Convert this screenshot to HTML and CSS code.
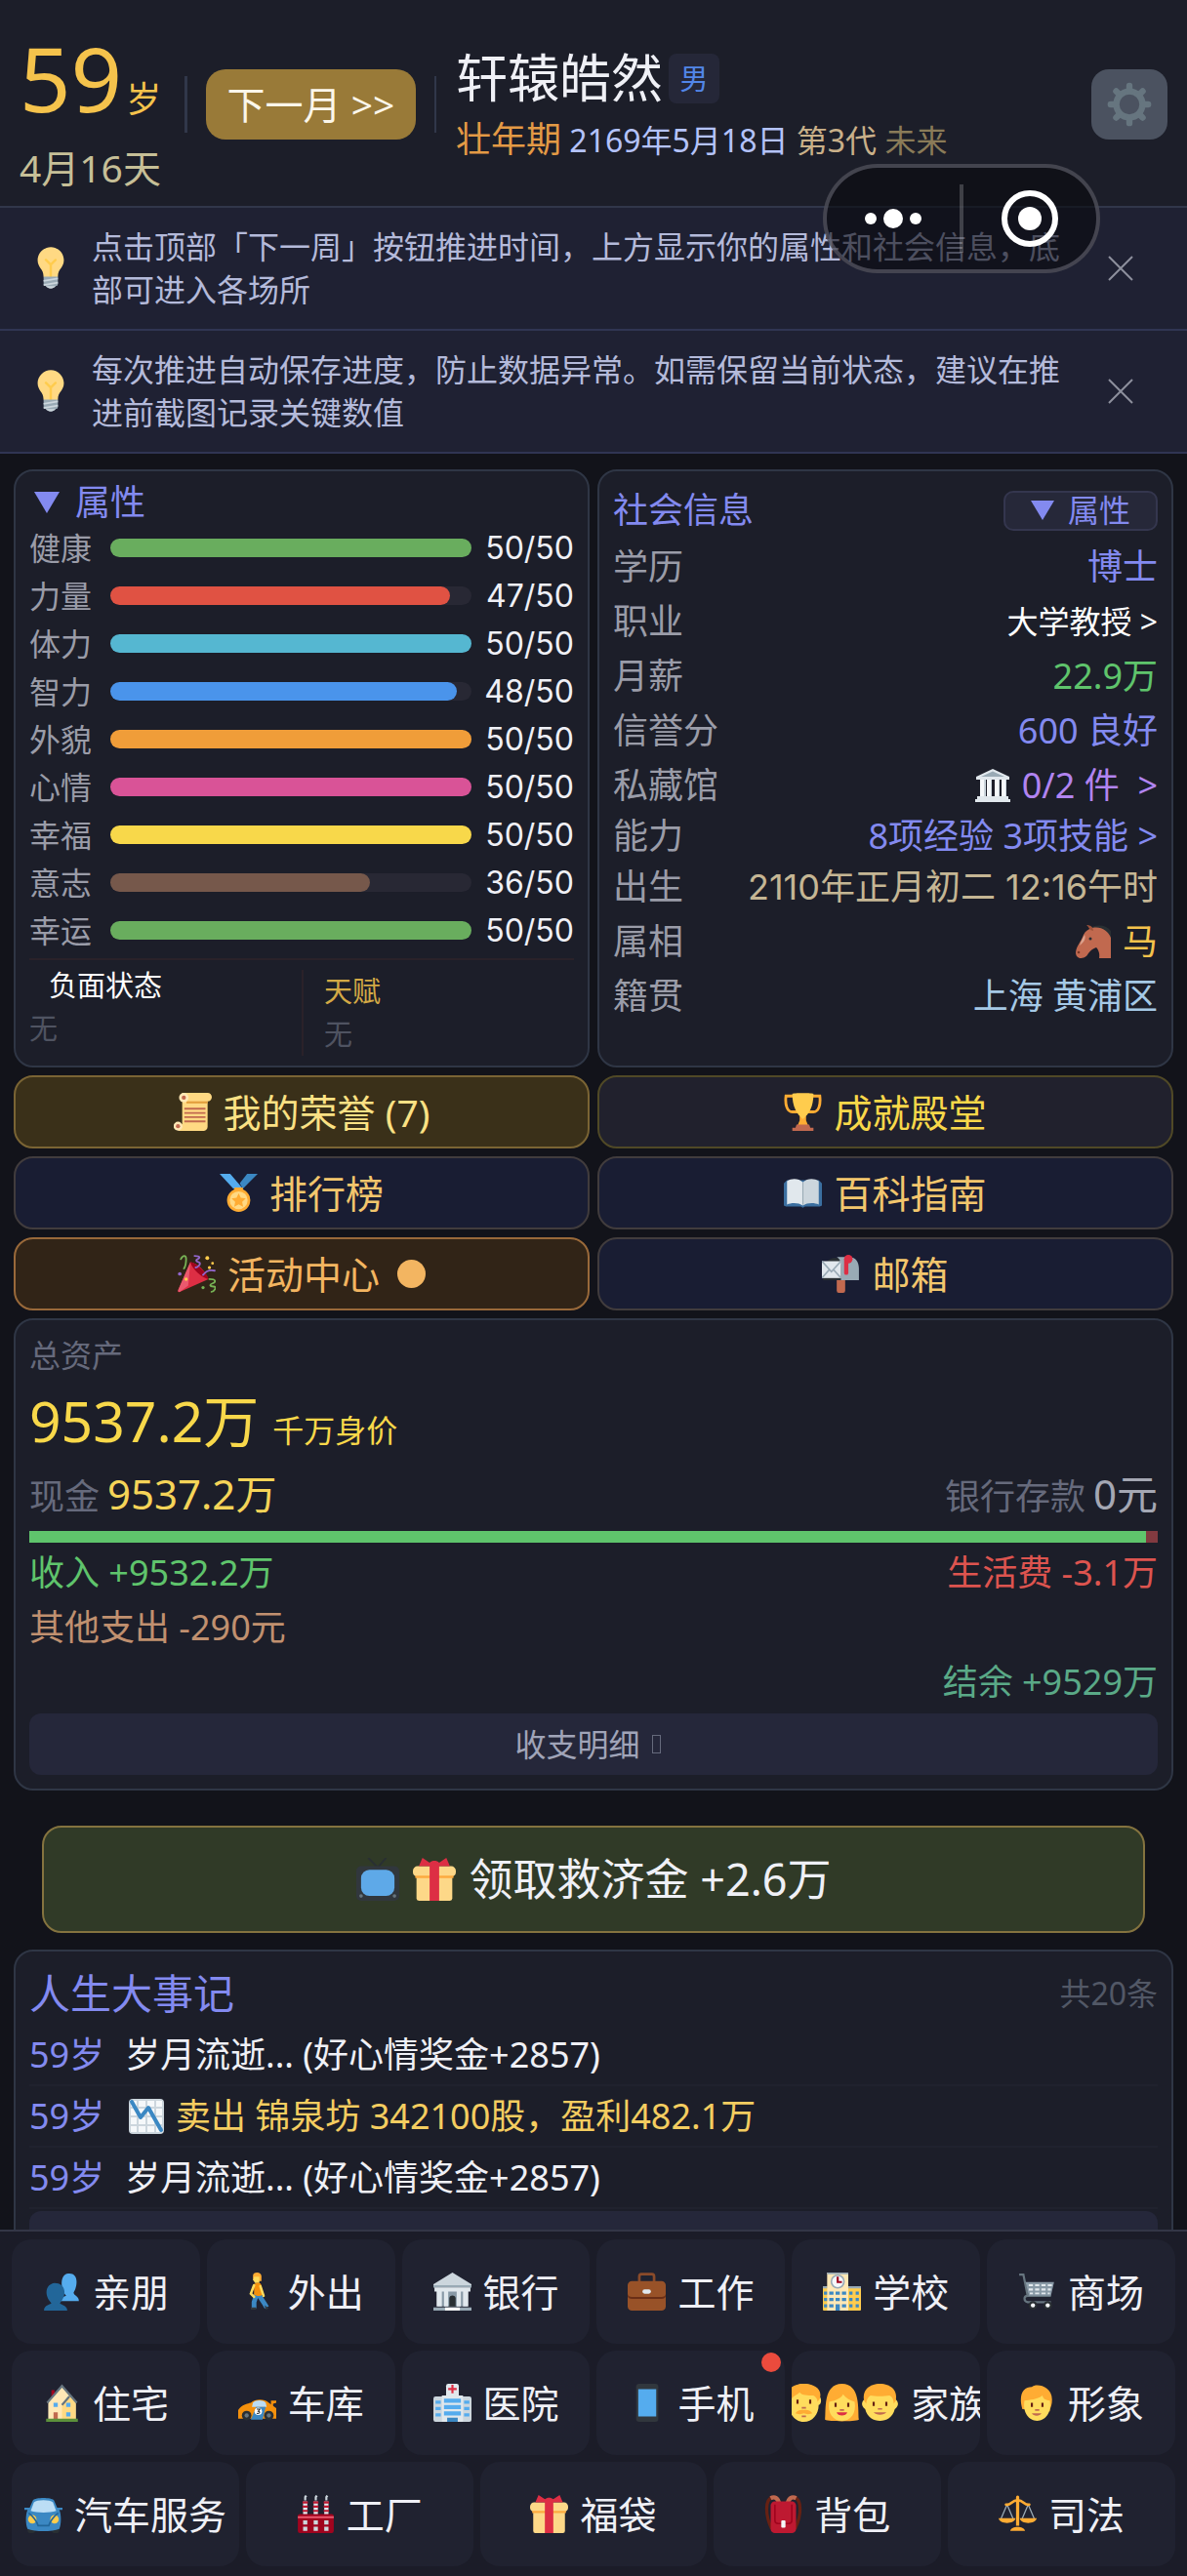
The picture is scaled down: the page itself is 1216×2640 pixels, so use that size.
FILE: index.html
```html
<!DOCTYPE html>
<html lang="zh-CN">
  <head>
    <meta charset="utf-8" />
    <meta name="viewport" content="width=device-width,initial-scale=1.0" />
    <title>轩辕皓然 59岁</title>
    <link rel="stylesheet" href="styles.css">
  </head>
  <body>
    <svg class="sprite" aria-hidden="true">
      <symbol id="bulb" viewBox="0 0 36 36">
        <path fill="#ffd983" d="M29 11.060c0 6.439-5 7.439-5 13.440 0 3.098-3.123 3.359-5.500 3.359-2.053 0-6.586-.779-6.586-3.361C11.914 18.500 7 17.500 7 11.060 7 5.029 12.285.140 18.083.140 23.883.140 29 5.029 29 11.060z"/>
        <path fill="#ccd6dd" d="M22.167 32.500c0 .828-2.234 2.500-4.167 2.500s-4.167-1.672-4.167-2.500 2.233-.500 4.167-.500c1.933 0 4.167-.328 4.167.500z"/>
        <path fill="#ffcc4d" d="M22.700 10.300a1 1 0 0 0-1.400 0L18 13.600l-3.300-3.300a1 1 0 1 0-1.400 1.400l3.700 3.700V26a1 1 0 1 0 2 0V15.400l3.700-3.700a1 1 0 0 0 0-1.400z"/>
        <path fill="#99aab5" d="M24 31a2 2 0 0 1-2 2h-8a2 2 0 0 1-2-2v-6h12v6z"/>
        <path d="M12 28.500l12-2M12 32l12-2" stroke="#ccd6dd" stroke-width="1.500"/>
      </symbol>
      <symbol id="gear" viewBox="0 0 36 36">
        <circle cx="18" cy="18" r="10.500" fill="none" stroke="#66757f" stroke-width="5"/>
        <g stroke="#66757f" stroke-width="5" stroke-linecap="round">
          <path d="M18 3v4M18 29v4M3 18h4M29 18h4M7.400 7.400l3 3M25.600 25.600l3 3M28.600 7.400l-3 3M10.400 25.600l-3 3"/>
        </g>
      </symbol>
      <symbol id="museum" viewBox="0 0 36 36">
        <path fill="#e1e8ed" d="M18 1L1 9v3h34V9z"/>
        <path fill="#99aab5" d="M18 3.500L6 9h24z"/>
        <path fill="#f5f8fa" d="M5 12h4v17H5zM12 12h4v17h-4zM20 12h4v17h-4zM27 12h4v17h-4z"/>
        <path fill="#ccd6dd" d="M9 12h2v17H9zM16 12h1v17h-1zM24 12h1v17h-1zM31 12h1v17h-1z"/>
        <path fill="#e1e8ed" d="M2 29h32v3h2v3H0v-3h2z"/>
      </symbol>
      <symbol id="horse" viewBox="0 0 36 36">
        <path fill="#292f33" d="M15 4c7-4 16-3 21 3v11L24 9z"/>
        <path fill="#c1694f" d="M36 35H24c1-5-1-9-3-11-3 1-6 3-8 6-2 4-5 5-9 5-3-1-4-3-4-6 1-7 5-10 8-18 2-4 5-6 9-7 9-2 16 3 19 10z"/>
        <path fill="#a0533b" d="M15 6c-2-2-2-4-4-5 4 0 7 2 7 6z"/>
        <circle cx="15" cy="15" r="1.500" fill="#292f33"/><circle cx="3" cy="29" r="1.300" fill="#7a3726"/>
        <path fill="#dba38f" d="M9 11c2 4-1 8-5 11 1-4 3-7 5-11z"/>
      </symbol>
      <symbol id="scroll" viewBox="0 0 36 36">
        <path fill="#ffd983" d="M8 0h24a4 4 0 0 1 0 8v24a4 4 0 0 1-4 4H4l4-7z"/>
        <path fill="#e39f3d" d="M12 8h20v2H12z"/>
        <circle cx="9.500" cy="4.500" r="4.500" fill="#ffe8b6"/><circle cx="9.500" cy="4.500" r="2" fill="#c1694f"/>
        <circle cx="4" cy="31.500" r="4.200" fill="#ffe8b6"/><circle cx="4" cy="31.500" r="2" fill="#c1694f"/>
        <path d="M10 15h20M10 19h20M10 23h20M10 27h20" stroke="#c1694f" stroke-width="1.700"/>
      </symbol>
      <symbol id="trophy" viewBox="0 0 36 36">
        <path fill="none" stroke="#ffac33" stroke-width="2.600" d="M9 3H2c-1 8 1 15 6 15h5M27 3h7c1 8-1 15-6 15h-5"/>
        <path fill="#ffac33" d="M15 22h6v4l2 5H13l2-5z"/>
        <path fill="#ffcc4d" d="M8 1c0-1 20-1 20 0 0 12-4 19-10 24C12 20 8 13 8 1z"/>
        <path fill="#c1694f" d="M12 30h12l1 3h3v3H8v-3h3z"/>
      </symbol>
      <symbol id="medal" viewBox="0 0 36 36">
        <path fill="#55acee" d="M0 0h10l12 14h-9z"/><path fill="#3b88c3" d="M36 0H26l-7 9 3 5z"/>
        <circle cx="18" cy="25" r="11" fill="#ffac33"/><circle cx="18" cy="25" r="8.500" fill="#ffd983"/>
        <path fill="#ffac33" d="M14 13h8v3h-8zM18 18.500l2 4.200 4.700.600-3.400 3.200.900 4.600-4.200-2.300-4.200 2.300.900-4.600-3.400-3.200 4.700-.600z"/>
      </symbol>
      <symbol id="book" viewBox="0 0 36 36">
        <path fill="#3b6fa0" d="M0 9l3-3h30l3 3v21l-2 1H20l-2 1-2-1H2l-2-1z"/>
        <path fill="#e1e8ed" d="M3 7c4-3 11-3 15 1v22c-4-3-11-3-15-1z"/>
        <path fill="#ccd6dd" d="M33 7c-4-3-11-3-15 1v22c4-3 11-3 15-1z"/>
        <path fill="#99aab5" d="M17.500 8h1v21h-1z"/>
      </symbol>
      <symbol id="party" viewBox="0 0 36 36">
        <path fill="#dd2e44" d="M12 7c7 1 14 8 17 16L2 35c-2 1-2-1-1-3z"/>
        <path fill="#ea596e" d="M12 7l-2 22-8 6c-2 0-2-1-1-3z"/>
        <path fill="#a0041e" d="M12 7c4-1 17 11 17 16-6-1-15-9-17-16z"/>
        <g fill="none" stroke-width="1.700" stroke-linecap="round">
          <path stroke="#77b255" d="M3 4c2-4 5-4 5 0s0 6-2 9M30 23c7 0 6 3 3 4s-3 3 1 3 0 5-2 5"/>
          <path stroke="#9266cc" d="M16 1c6 0 5 2 3 3s-2 2 1 3-1 5-3 5M24 19c3-4 7-5 11-4"/>
        </g>
        <g fill="#ffcc4d"><circle cx="28" cy="3" r="1.800"/><circle cx="33" cy="8" r="1.300"/><circle cx="30" cy="12" r="1.500"/><circle cx="8" cy="23" r="1.600"/></g>
        <circle cx="2" cy="18" r="1.700" fill="#9266cc"/><circle cx="24" cy="31" r="1.500" fill="#77b255"/>
      </symbol>
      <symbol id="mailbox" viewBox="0 0 36 36">
        <path fill="#c1694f" d="M14 20h8v14a2 2 0 0 1-2 2h-4a2 2 0 0 1-2-2z"/>
        <path fill="#292f33" d="M4 8c2-6 12-6 16-3v19H1z"/>
        <path fill="#99aab5" d="M14 2h12c6 0 9 5 9 11v11H18V11c0-5-1-7-4-9z"/>
        <path fill="#e1e8ed" d="M0 6h18v16H0z"/><path fill="none" stroke="#99aab5" stroke-width="1.500" d="M0 6l9 10 9-10M0 22l7-8M18 22l-7-8"/>
        <path fill="#dd2e44" d="M21 4h4v13a2 2 0 0 1-4 0z"/><circle cx="25" cy="4" r="4" fill="#dd2e44"/>
      </symbol>
      <symbol id="tv" viewBox="0 0 36 36">
        <path d="M18 8L10 0M18 8l7-8" stroke="#292f33" stroke-width="1.500"/>
        <rect y="7" width="36" height="29" rx="4" fill="#31373d"/><rect x="4" y="10" width="28" height="22" rx="7" fill="#5ea9e8"/>
        <circle cx="4" cy="32" r="1.500" fill="#66757f"/><circle cx="32" cy="32" r="1.500" fill="#66757f"/>
      </symbol>
      <symbol id="gift" viewBox="0 0 36 36">
        <path fill="#fdd888" d="M3 15h30v19a2 2 0 0 1-2 2H5a2 2 0 0 1-2-2z"/>
        <rect y="7" width="36" height="9" rx="4" fill="#fdd888"/><path fill="#fcab40" d="M2 15h32v2H2z"/>
        <path fill="#dd2e44" d="M14 5h8v31h-8zM5 7L8 0l6 4c2-2 6-2 8 0l6-4 3 7z"/>
      </symbol>
      <symbol id="chart" viewBox="0 0 36 36">
        <rect width="36" height="36" rx="4" fill="#ccd6dd"/>
        <path fill="#f5f8fa" d="M2 2h6v6H2zM10 2h7v6h-7zM19 2h7v6h-7zM28 2h6v6h-6zM2 10h6v7H2zM10 10h7v7h-7zM19 10h7v7h-7zM28 10h6v7h-6zM2 19h6v7H2zM10 19h7v7h-7zM19 19h7v7h-7zM28 19h6v7h-6zM2 28h6v6H2zM10 28h7v6h-7zM19 28h7v6h-7zM28 28h6v6h-6z"/>
        <path fill="none" stroke="#3b88c3" stroke-width="4" stroke-linejoin="round" stroke-linecap="round" d="M3 3l9 16 8-10 13 23"/>
      </symbol>
      <symbol id="people" viewBox="0 0 36 36">
        <path fill="#55acee" d="M34 27H17c0-4 3-4 5-5-5-5-7-20 2-21 10-1 9 12 5 18 0 3 5 3 5 8z"/>
        <path fill="#226699" d="M1 36c0-5 4-5 7-7-7-7-6-18 3-19 11 0 12 12 5 19 2 2 7 2 7 7z"/>
      </symbol>
      <symbol id="walk" viewBox="0 0 36 36">
        <path fill="none" stroke="#3b88c3" stroke-width="4.500" d="M18 19l-3 9v6M18 19c3 5 5 7 9 14"/>
        <path fill="#ffac33" d="M14 3c0-4 8-4 8 1v4h-3l-5-2z"/><path fill="#ffdc5d" d="M15 4h5v6h-4l-2-3z"/>
        <path fill="#f4900c" d="M15 11c3-2 6-2 7 1l1 9c-3 2-6 1-8 0z"/>
        <path fill="none" stroke="#ffdc5d" stroke-width="2.400" stroke-linecap="round" d="M15 12l-3 8 3 3M21 13l3 9"/>
        <path fill="#31373d" d="M12 33h5v2h-5zM25 31l4 3-3 1z"/>
      </symbol>
      <symbol id="bank" viewBox="0 0 36 36">
        <path fill="#ccd6dd" d="M18 0L0 11v3h36v-3z"/><path fill="#99aab5" d="M0 12h36v2H0z"/>
        <path fill="#8899a6" d="M4 17h28v15H4z"/><path fill="#e1e8ed" d="M1 14h34v4H1zM3 18h5v14H3zM10 18h4v14h-4zM22 18h4v14h-4zM28 18h5v14h-5z"/>
        <path fill="#292f33" d="M15 32v-8c1-3 5-3 6 0v8z"/><path fill="#99aab5" d="M0 33h36v3H0z"/><path fill="#f5f8fa" d="M11 33h14v3H11z"/>
      </symbol>
      <symbol id="briefcase" viewBox="0 0 36 36">
        <path fill="none" stroke="#8a4b2a" stroke-width="2.500" d="M11 9V4c0-2 1-2.500 2-2.500h10c1 0 2 .500 2 2.500v5"/>
        <rect y="8" width="36" height="28" rx="4" fill="#985228"/><path fill="#6a2e16" d="M0 20c0 2 2 3 4 3h28c2 0 4-1 4-3v2c0 2-2 3-4 3H4c-2 0-4-1-4-3z"/>
        <rect x="14" y="16" width="8" height="4" rx="2" fill="#e1e8ed"/>
      </symbol>
      <symbol id="school" viewBox="0 0 36 36">
        <rect y="13" width="36" height="23" rx="1" fill="#ffcc4d"/><path fill="#ffe8b6" d="M4 0h20v36H4z"/>
        <path fill="#99aab5" d="M4 0h20v1.500H4zM0 13h4v2H0zM24 13h12v2H24z"/>
        <circle cx="14" cy="8.500" r="6" fill="#f5f8fa" stroke="#99aab5" stroke-width="1.500"/><path d="M14 4v5h4" fill="none" stroke="#a0041e" stroke-width="2"/>
        <path fill="#3b88c3" d="M1 18h3v3H1zM6 18h4v3H6zM12 18h4v3h-4zM18 18h4v3h-4zM25 18h3v3h-3zM31 18h3v3h-3zM1 24h3v3H1zM6 24h4v3H6zM12 24h4v3h-4zM18 24h4v3h-4zM25 24h3v3h-3zM31 24h3v3h-3zM1 30h3v3H1zM6 30h4v3H6zM12 30h4v6h-4zM18 30h4v3h-4zM25 30h3v3h-3zM31 30h3v3h-3z"/>
      </symbol>
      <symbol id="cart" viewBox="0 0 36 36">
        <path fill="none" stroke="#66757f" stroke-width="2" d="M1 2h4l4 20h22M9 22c-4 0-4 5 0 6h22"/>
        <path fill="#8899a6" d="M7 9h27l-3 13H10z"/><path fill="#e1e8ed" d="M10 11h4v2h-4zM16 11h4v2h-4zM22 11h4v2h-4zM28 11h4v2h-4zM10 15h4v2h-4zM16 15h4v2h-4zM22 15h4v2h-4zM28 15h3v2h-3zM11 19h3v1.500h-3zM16 19h4v1.500h-4zM22 19h4v1.500h-4zM28 19h2v1.500h-2z"/>
        <circle cx="14" cy="31" r="4" fill="#292f33"/><circle cx="28" cy="31" r="4" fill="#292f33"/><circle cx="14" cy="31" r="2" fill="#f5f8fa"/><circle cx="28" cy="31" r="2" fill="#f5f8fa"/>
      </symbol>
      <symbol id="house" viewBox="0 0 36 36">
        <path fill="#a0041e" d="M8 6h3v8H8z"/><path fill="#ffe8b6" d="M18 3L5 17v17h26V17z"/><path fill="#ffd983" d="M31 17l-6-5-7 8v14h13z"/>
        <path fill="none" stroke="#66757f" stroke-width="2" d="M4 18L18 2l14 16M18 20l7-8"/>
        <path fill="#55acee" d="M10 18h4v4h-4zM22 18h4v4h-4zM22 27h4v4h-4z"/><path fill="#c1694f" d="M10 27h4v7h-4z"/><path fill="#5c913b" d="M3 33h30v3H3z"/>
      </symbol>
      <symbol id="racecar" viewBox="0 0 36 36">
        <path fill="#f4900c" d="M0 33V25c2-4 7-6 12-7 4-4 13-4 17 0l7 5v10z"/><path fill="#f4900c" d="M31 16h5v2l-3 1v4h-2z"/>
        <path fill="#bbddf5" d="M14 18c3-3 9-3 12 0l1 4H13z"/><path fill="#3b88c3" d="M17 22h9l-3 12H12z"/>
        <circle cx="8" cy="30" r="4.500" fill="#292f33"/><circle cx="29" cy="30" r="4.500" fill="#292f33"/><circle cx="8" cy="30" r="2" fill="#66757f"/><circle cx="29" cy="30" r="2" fill="#66757f"/>
        <circle cx="19" cy="26" r="3.500" fill="#fff"/><path fill="none" stroke="#292f33" d="M17.500 24h3l-1.500 2c2 0 2 2.500-1.500 2"/>
      </symbol>
      <symbol id="hospital" viewBox="0 0 36 36">
        <rect x="12" width="12" height="14" rx="2" fill="#e1e8ed"/><path fill="#dd2e44" d="M17 1h2v3h3v2h-3v3h-2V6h-3V4h3z"/>
        <rect y="12" width="36" height="24" rx="2" fill="#ccd6dd"/><path fill="#e1e8ed" d="M8 11h20v25H8z"/>
        <path fill="#55acee" d="M10 14h16v4H10zM10 20h16v4H10zM10 26h16v4H10zM2 16h5v3H2zM2 22h5v3H2zM2 28h5v3H2zM29 16h5v3h-5zM29 22h5v3h-5zM29 28h5v3h-5z"/><path fill="#3b88c3" d="M13 32h10v4H13z"/>
      </symbol>
      <symbol id="phone" viewBox="0 0 36 36">
        <rect x="8" width="21" height="36" rx="3" fill="#31373d"/><path fill="#55acee" d="M10 5h17v26H10z"/>
      </symbol>
      <symbol id="man" viewBox="0 0 36 36">
        <path fill="#ffdc5d" d="M4 12c0-16 28-16 28 0 3 0 3 8 0 8 0 9-6 16-14 16S4 29 4 20c-3 0-3-8 0-8z"/>
        <path fill="#ffac33" d="M3 14C1 5 8 0 18 0s18 5 15 14l-2 3c0-3-2-5-4-6-5 0-11 0-13-3-3 3-8 4-9 9z"/>
        <path fill="#662113" d="M11 15h2v4h-2zM23 15h2v4h-2z"/><path fill="#c1694f" d="M16 22h4v1.500h-4z"/>
        <path fill="#ffac33" d="M10 28c1-2 5-4 8-3 3-1 7 1 8 3-2 1-6 1-8 0-2 1-6 1-8 0z"/><path fill="#c1694f" d="M16 30h4v1.500h-4z"/>
      </symbol>
      <symbol id="woman" viewBox="0 0 36 36">
        <path fill="#ffac33" d="M2 34C3 25 0 0 18 0s15 25 16 34c-4 2-28 2-32 0z"/>
        <path fill="#ffdc5d" d="M6 17c7-1 12-4 13-7 3 4 7 6 11 7 2 11-4 18-12 18S4 28 6 17z"/>
        <path fill="#662113" d="M11 18h2v4h-2zM23 18h2v4h-2z"/><path fill="#c1694f" d="M16 24h4v1.500h-4z"/><path fill="#dd2e44" d="M13 27h10c-1 4-9 4-10 0z"/>
      </symbol>
      <symbol id="boy" viewBox="0 0 36 36">
        <path fill="#ffdc5d" d="M4 14C6-1 30-1 32 14c4 3 4 7 0 10-2 8-8 11-14 11S6 32 4 24c-4-3-4-7 0-10z"/>
        <path fill="#ffac33" d="M3 16C1 6 8 0 18 0s17 6 15 16l-2 3c0-5-2-7-4-8-5 1-14 1-18 0-3 2-4 5-4 8z"/>
        <path fill="#662113" d="M11 17h2v4h-2zM23 17h2v4h-2z"/><path fill="#c1694f" d="M16 23h4v1.500h-4zM12 27h12c-2 3-10 3-12 0z"/>
      </symbol>
      <symbol id="person" viewBox="0 0 36 36">
        <path fill="#ffac33" d="M4 24C0 10 5 3 13 3c4-4 20-1 19 13 0 5-2 7-2 10z"/>
        <path fill="#ffdc5d" d="M6 16c5-1 12-1 17-5 1 4 3 4 7 5 2 11-4 19-12 19S4 27 6 16z"/>
        <path fill="#662113" d="M12 18h2v4h-2zM22 18h2v4h-2z"/><path fill="#c1694f" d="M16 24h4v1.500h-4zM13 28h9c-1 3-8 3-9 0z"/>
      </symbol>
      <symbol id="car" viewBox="0 0 36 36">
        <rect x="3" y="28" width="7" height="8" rx="2" fill="#292f33"/><rect x="26" y="28" width="7" height="8" rx="2" fill="#292f33"/>
        <path fill="#3b88c3" d="M0 12h5l3-7c3-3 17-3 20 0l3 7h5v2h-3c2 4 2 14 0 18-7 3-23 3-30 0-2-4-2-14 0-18H0z"/>
        <path fill="#bbddf5" d="M6 15l3-8c3-3 15-3 18 0l3 8c-6 2-18 2-24 0z"/>
        <circle cx="7.500" cy="23" r="4" fill="#ffcc4d"/><circle cx="28.500" cy="23" r="4" fill="#ffcc4d"/>
        <path fill="none" stroke="#226699" stroke-width="1.500" d="M4 17c5 4 8 9 9 12h10c1-3 4-8 9-12"/>
      </symbol>
      <symbol id="factory" viewBox="0 0 36 36">
        <path fill="#e1e8ed" d="M6 6h4v13H6zM16 6h4v13h-4zM26 6h4v13h-4z"/><path fill="#be1931" d="M5.500 6h5v2h-5zM5.500 10h5v2h-5zM5.500 14h5v2h-5zM15.500 6h5v2h-5zM15.500 10h5v2h-5zM15.500 14h5v2h-5zM25.500 6h5v2h-5zM25.500 10h5v2h-5zM25.500 14h5v2h-5z"/>
        <path d="M8 5V2l1-1.500M18 5V2l1-1.500M28 5V2l1-1.500" stroke="#ccd6dd" stroke-width="2"/>
        <rect x="1" y="18" width="34" height="18" rx="2" fill="#a0041e"/><path fill="#ea596e" d="M1 20h34v2H1z"/>
        <path fill="#ccd6dd" d="M6 24h4v4H6zM16 24h4v4h-4zM26 24h4v4h-4zM6 30h4v4H6zM16 30h4v4h-4zM26 30h4v4h-4z"/>
      </symbol>
      <symbol id="backpack" viewBox="0 0 36 36">
        <path fill="none" stroke="#662113" stroke-width="3" d="M8 2C0 4 1 20 7 32M28 2c8 2 7 18 1 30"/>
        <path fill="none" stroke="#c1694f" stroke-width="4" d="M6 3c4-2 7 0 8 5M30 3c-4-2-7 0-8 5"/>
        <rect x="6" y="6" width="24" height="30" rx="4" fill="#be1931"/><path fill="none" stroke="#a0041e" stroke-width="1.500" d="M10 9v15c0 2 1 3 3 3h10c2 0 3-1 3-3V9"/><rect x="16" y="24" width="4" height="7" rx="1" fill="#f5f8fa"/>
      </symbol>
      <symbol id="scales" viewBox="0 0 36 36">
        <path fill="none" stroke="#99aab5" stroke-width="1.200" d="M8 9L2 23M8 9l6 14M28 9l-6 14M28 9l6 14"/>
        <path fill="#ffac33" d="M16.500 2a1.500 1.500 0 0 1 3 0v27h-3zM0 22h16c-1 6-15 6-16 0zM20 22h16c-1 6-15 6-16 0zM11 34c1-5 13-5 14 0z"/>
        <path fill="none" stroke="#ffac33" stroke-width="2.500" stroke-linecap="round" d="M7 9c5 1 5-4 11-4s6 5 11 4"/>
      </symbol>
    </svg>

    <header class="top">
      <div class="age">
        <p class="years"><strong>59</strong><span>岁</span></p>
        <p class="days">4月16天</p>
      </div>
      <div class="bar-line thick"></div>
      <button class="next" type="button">下一月 &gt;&gt;</button>
      <div class="bar-line"></div>
      <div class="who">
        <h1>轩辕皓然 <span class="sex">男</span></h1>
        <p><span class="stage">壮年期</span> <span class="date">2169年5月18日</span> <span class="gen">第3代</span> <span class="era">未来</span></p>
      </div>
      <button class="settings" type="button" aria-label="设置"><svg><use href="#gear"/></svg></button>
    </header>

    <div class="capsule">
      <button type="button" aria-label="更多"><svg class="dots" viewBox="0 0 60 24"><circle cx="7" cy="12" r="6"/><circle cx="30" cy="12" r="10"/><circle cx="53" cy="12" r="6"/></svg></button>
      <button type="button" aria-label="关闭"><svg class="target" viewBox="0 0 58 58"><circle class="ring" cx="29" cy="29" r="26"/><circle cx="29" cy="29" r="12"/></svg></button>
    </div>

    <div class="tip">
      <svg class="tip-icon"><use href="#bulb"/></svg>
      <p>点击顶部「下一周」按钮推进时间，上方显示你的属性和社会信息，底部可进入各场所</p>
      <button type="button" aria-label="关闭提示"><svg viewBox="0 0 26 26"><path d="M1 1l24 24M25 1L1 25"/></svg></button>
    </div>
    <div class="tip">
      <svg class="tip-icon"><use href="#bulb"/></svg>
      <p>每次推进自动保存进度，防止数据异常。如需保留当前状态，建议在推进前截图记录关键数值</p>
      <button type="button" aria-label="关闭提示"><svg viewBox="0 0 26 26"><path d="M1 1l24 24M25 1L1 25"/></svg></button>
    </div>

    <main>
      <div class="grid">
        <section class="panel stats">
          <h2><i class="tri"></i>属性</h2>
          <ul>
            <li><span>健康</span><div class="track"><div class="fill green" style="width: 100%"></div></div><b>50/50</b></li>
            <li><span>力量</span><div class="track"><div class="fill red" style="width: 94%"></div></div><b>47/50</b></li>
            <li><span>体力</span><div class="track"><div class="fill cyan" style="width: 100%"></div></div><b>50/50</b></li>
            <li><span>智力</span><div class="track"><div class="fill blue" style="width: 96%"></div></div><b>48/50</b></li>
            <li><span>外貌</span><div class="track"><div class="fill orange" style="width: 100%"></div></div><b>50/50</b></li>
            <li><span>心情</span><div class="track"><div class="fill pink" style="width: 100%"></div></div><b>50/50</b></li>
            <li><span>幸福</span><div class="track"><div class="fill yellow" style="width: 100%"></div></div><b>50/50</b></li>
            <li><span>意志</span><div class="track"><div class="fill brown" style="width: 72%"></div></div><b>36/50</b></li>
            <li><span>幸运</span><div class="track"><div class="fill green" style="width: 100%"></div></div><b>50/50</b></li>
          </ul>
          <div class="traits">
            <div class="negative"><h3>负面状态</h3><p>无</p></div>
            <div class="talent"><h3>天赋</h3><p>无</p></div>
          </div>
        </section>

        <section class="panel social">
          <div class="social-head">
            <h2>社会信息</h2>
            <button type="button"><i class="tri"></i>属性</button>
          </div>
          <dl>
            <div><dt>学历</dt><dd class="violet">博士</dd></div>
            <div><dt>职业</dt><dd class="job">大学教授 &gt;</dd></div>
            <div><dt>月薪</dt><dd class="money">22.9万</dd></div>
            <div><dt>信誉分</dt><dd class="violet">600 良好</dd></div>
            <div><dt>私藏馆</dt><dd class="purple"><svg><use href="#museum"/></svg>0/2 件 &nbsp;&gt;</dd></div>
            <div class="tight"><dt>能力</dt><dd class="violet">8项经验 3项技能 &gt;</dd></div>
            <div><dt>出生</dt><dd class="sand">2110年正月初二 12:16午时</dd></div>
            <div><dt>属相</dt><dd class="gold"><svg><use href="#horse"/></svg>马</dd></div>
            <div><dt>籍贯</dt><dd class="sky">上海 黄浦区</dd></div>
          </dl>
        </section>

        <button class="link honor" type="button"><svg><use href="#scroll"/></svg>我的荣誉 (7)</button>
        <button class="link hall" type="button"><svg><use href="#trophy"/></svg>成就殿堂</button>
        <button class="link" type="button"><svg><use href="#medal"/></svg>排行榜</button>
        <button class="link" type="button"><svg><use href="#book"/></svg>百科指南</button>
        <button class="link event" type="button"><svg><use href="#party"/></svg>活动中心<i class="dot"></i></button>
        <button class="link" type="button"><svg><use href="#mailbox"/></svg>邮箱</button>
      </div>

      <section class="panel assets">
        <h2>总资产</h2>
        <p class="total"><strong>9537.2万</strong><span>千万身价</span></p>
        <div class="row cash">
          <p>现金 <b class="yellow-text">9537.2万</b></p>
          <p>银行存款 <b>0元</b></p>
        </div>
        <div class="flow"><div class="in" style="width: 99%"></div></div>
        <div class="row"><span class="income">收入 +9532.2万</span><span class="living">生活费 -3.1万</span></div>
        <div class="row"><span class="other">其他支出 -290元</span></div>
        <div class="row end"><span class="balance">结余 +9529万</span></div>
        <button class="detail" type="button">收支明细<i class="box"></i></button>
      </section>

      <button class="claim" type="button"><svg><use href="#tv"/></svg><svg><use href="#gift"/></svg>领取救济金 +2.6万</button>

      <section class="panel history">
        <div class="history-head"><h2>人生大事记</h2><span>共20条</span></div>
        <ol>
          <li><span>59岁</span><p>岁月流逝... (好心情奖金+2857)</p></li>
          <li><span>59岁</span><p class="trade"><svg><use href="#chart"/></svg>卖出 锦泉坊 342100股，盈利482.1万</p></li>
          <li><span>59岁</span><p>岁月流逝... (好心情奖金+2857)</p></li>
        </ol>
        <button class="more" type="button" aria-label="查看更多"></button>
      </section>
    </main>

    <nav>
      <div class="nav-row">
        <button type="button"><svg><use href="#people"/></svg>亲朋</button>
        <button type="button"><svg><use href="#walk"/></svg>外出</button>
        <button type="button"><svg><use href="#bank"/></svg>银行</button>
        <button type="button"><svg><use href="#briefcase"/></svg>工作</button>
        <button type="button"><svg><use href="#school"/></svg>学校</button>
        <button type="button"><svg><use href="#cart"/></svg>商场</button>
      </div>
      <div class="nav-row">
        <button type="button"><svg><use href="#house"/></svg>住宅</button>
        <button type="button"><svg><use href="#racecar"/></svg>车库</button>
        <button type="button"><svg><use href="#hospital"/></svg>医院</button>
        <button type="button"><svg><use href="#phone"/></svg>手机<i class="badge"></i></button>
        <button type="button"><span class="family"><svg><use href="#man"/></svg><svg><use href="#woman"/></svg><svg><use href="#boy"/></svg></span>家族</button>
        <button type="button"><svg><use href="#person"/></svg>形象</button>
      </div>
      <div class="nav-row">
        <button type="button"><svg><use href="#car"/></svg>汽车服务</button>
        <button type="button"><svg><use href="#factory"/></svg>工厂</button>
        <button type="button"><svg><use href="#gift"/></svg>福袋</button>
        <button type="button"><svg><use href="#backpack"/></svg>背包</button>
        <button type="button"><svg><use href="#scales"/></svg>司法</button>
      </div>
    </nav>
  </body>
</html>
```

FILE: styles.css
```css
* {
  box-sizing: border-box;
}
body {
  margin: 0;
  height: 100vh;
  display: flex;
  flex-direction: column;
  background: #12131a;
  color: #eff0f6;
  font-family: "Noto Sans", "Noto Sans CJK SC", sans-serif;
  font-size: 36px;
  line-height: 56px;
}
h1, h2, h3, p, ul, ol, dl, dd {
  margin: 0;
  padding: 0;
  font-weight: 400;
}
ul, ol {
  list-style: none;
}
b, strong {
  font-weight: 400;
}
button {
  font: inherit;
  color: inherit;
  padding: 0;
  border: none;
  background: none;
  cursor: pointer;
}
svg {
  flex-shrink: 0;
}
.sprite {
  display: none;
}

/* top bar */
.top {
  display: flex;
  align-items: center;
  padding: 22px 20px 19px;
  background: #1c1e29;
  border-bottom: 2px solid #31374a;
}
.age {
  width: 169px;
}
.years {
  display: flex;
  align-items: baseline;
  gap: 4px;
  color: #f5c34c;
  line-height: 36px;
}
.years strong {
  font-size: 92px;
  line-height: 116px;
}
.days {
  margin-top: 14px;
  font-size: 39px;
  line-height: 40px;
  color: #c6bf97;
}
.bar-line {
  width: 2px;
  height: 58px;
  background: #31374a;
}
.bar-line.thick {
  width: 3px;
}
.next {
  width: 215px;
  height: 72px;
  margin: 0 19px;
  border-radius: 20px;
  background: #997a38;
  color: #fbf6ea;
  font-size: 39px;
  white-space: nowrap;
}
.who {
  flex: 1;
  padding-left: 20px;
}
.who h1 {
  display: flex;
  align-items: center;
  gap: 6px;
  font-size: 53px;
  line-height: 64px;
}
.sex {
  width: 52px;
  border-radius: 8px;
  background: #252738;
  color: #5286e8;
  font-size: 29px;
  line-height: 51px;
  text-align: center;
}
.who p {
  margin-top: 10px;
  font-size: 32px;
  line-height: 44px;
}
.stage {
  font-size: 36px;
  line-height: 36px;
  color: #e39a45;
}
.date {
  color: #b4c3fb;
}
.gen {
  color: #c9b089;
}
.era {
  color: #8a7b58;
}
.settings {
  width: 78px;
  height: 72px;
  border-radius: 18px;
  background: #4b5260;
  display: grid;
  place-items: center;
}
.settings svg {
  width: 46px;
  height: 46px;
}

/* floating system capsule */
.capsule {
  position: absolute;
  top: 168px;
  right: 89px;
  width: 284px;
  height: 112px;
  display: flex;
  align-items: center;
  border: 4px solid rgba(120, 120, 132, 0.5);
  border-radius: 56px;
  background: rgba(8, 8, 14, 0.6);
}
.capsule button {
  flex: 1;
  height: 70px;
  display: grid;
  place-items: center;
}
.capsule button + button {
  border-left: 4px solid rgba(255, 255, 255, 0.2);
}
.capsule svg {
  fill: #fff;
}
.dots {
  width: 60px;
  height: 24px;
}
.target {
  width: 58px;
  height: 58px;
}
.ring {
  fill: none;
  stroke: #fff;
  stroke-width: 6;
}

/* tips */
.tip {
  display: flex;
  align-items: center;
  gap: 20px;
  padding: 18px 32px 18px 30px;
  background: #1f2133;
  border-bottom: 2px solid #303553;
}
.tip-icon {
  width: 44px;
  height: 44px;
}
.tip p {
  flex: 1;
  font-size: 32px;
  line-height: 44px;
  color: #b4bada;
}
.tip button {
  width: 72px;
  height: 72px;
  display: grid;
  place-items: center;
}
.tip button svg {
  width: 26px;
  height: 26px;
  stroke: #8d909d;
  stroke-width: 2;
}

main {
  flex: 1;
  min-height: 0;
  overflow: hidden;
  padding: 16px 14px 0;
}
.grid {
  display: grid;
  grid-template-columns: 1fr 1fr;
  gap: 8px;
}
.panel {
  padding: 10px 14px;
  border: 2px solid #2f3645;
  border-radius: 20px;
  background: #1c1e29;
}
.panel h2 {
  font-size: 36px;
  color: #838af0;
}
.tri {
  border: solid transparent;
  border-width: 22px 13px 0;
  border-top-color: #838af0;
}

/* attributes */
.stats h2 {
  display: flex;
  align-items: center;
  gap: 16px;
  padding-left: 5px;
  line-height: 44px;
}
.stats li {
  display: grid;
  grid-template-columns: 83px 1fr 105px;
  align-items: center;
  font-size: 32px;
  line-height: 49px;
}
.stats li span {
  color: #9a9ca8;
}
.stats li b {
  font-family: Inter, sans-serif;
  text-align: right;
}
.track {
  height: 19px;
  border-radius: 10px;
  background: #282834;
}
.fill {
  height: 100%;
  border-radius: 10px;
}
.green { background: #69ad5e; }
.red { background: #e05243; }
.cyan { background: #55b7d1; }
.blue { background: #4a94eb; }
.orange { background: #f09d39; }
.pink { background: #d95397; }
.yellow { background: #f8d84a; }
.brown { background: #76584b; }
.traits {
  display: grid;
  grid-template-columns: 1fr 1fr;
  margin-top: 4px;
  padding-top: 4px;
  border-top: 2px solid #2a2229;
  font-size: 29px;
  line-height: 44px;
}
.traits h3 {
  font-size: 29px;
}
.traits p {
  color: #4f5361;
}
.negative h3 {
  padding-left: 20px;
  color: #fff;
}
.talent {
  margin-top: 6px;
  padding-left: 21px;
  border-left: 2px solid #2a2229;
}
.talent h3 {
  color: #d3a945;
}

/* social info */
.social-head {
  display: flex;
  align-items: center;
  justify-content: space-between;
  height: 60px;
}
.social-head button {
  width: 158px;
  height: 41px;
  display: flex;
  align-items: center;
  justify-content: center;
  gap: 14px;
  border: 2px solid #34364e;
  border-radius: 10px;
  background: #262839;
  color: #838af0;
  font-size: 32px;
}
.social-head .tri {
  border-width: 20px 12px 0;
}
.social dl div {
  display: flex;
  justify-content: space-between;
}
.social dl .tight {
  line-height: 48px;
}
.social dt {
  color: #9a9ca8;
}
.social dd {
  display: flex;
  align-items: center;
}
.social dd svg {
  width: 36px;
  height: 36px;
  margin-right: 12px;
}
.violet { color: #838af0; }
.social .job { color: #fff; font-size: 32px; }
.money { color: #5fc46c; }
.purple { color: #b184f0; }
.sand { color: #c5b694; font-family: Inter, "Noto Sans CJK SC", sans-serif; }
.gold { color: #f5c34c; }
.sky { color: #a5c9e6; }

/* shortcut buttons */
.link {
  display: flex;
  align-items: center;
  justify-content: center;
  gap: 12px;
  height: 75px;
  border: 2px solid #413c3d;
  border-radius: 20px;
  background: #191d33;
  color: #f2c66d;
  font-size: 39px;
}
.link svg {
  width: 39px;
  height: 39px;
}
.honor {
  background: #3a3019;
  border-color: #7a6434;
  color: #fbe184;
}
.hall {
  background: #21212d;
  border-color: #504926;
  color: #f8d84a;
}
.event {
  background: #312417;
  border-color: #99693a;
  color: #f3b561;
}
.dot {
  width: 29px;
  height: 29px;
  margin-left: 6px;
  border-radius: 50%;
  background: #f3b561;
}

/* assets */
.assets {
  margin-top: 8px;
  padding: 14px;
}
.assets h2 {
  font-size: 32px;
  line-height: 44px;
  color: #666a7c;
}
.total {
  display: flex;
  align-items: baseline;
  gap: 14px;
  line-height: 90px;
  color: #f8d84a;
}
.total strong {
  font-size: 57px;
}
.total span {
  font-size: 32px;
  line-height: 32px;
}
.row {
  display: flex;
  justify-content: space-between;
}
.row.end {
  justify-content: flex-end;
}
.cash {
  height: 56px;
  margin-top: 2px;
  color: #666a7c;
}
.cash p {
  display: flex;
  align-items: baseline;
  gap: 8px;
}
.cash b {
  font-size: 42px;
  color: #a4a7b3;
}
.cash .yellow-text {
  color: #f5d458;
}
.flow {
  height: 12px;
  margin: 10px 0 3px;
  background: #823a40;
}
.in {
  height: 100%;
  background: #5fc46c;
}
.income { color: #5fc46c; }
.living { color: #dd544f; }
.other { color: #c0906f; }
.balance { color: #5aa987; }
.detail {
  display: flex;
  align-items: center;
  justify-content: center;
  width: 100%;
  height: 63px;
  margin-top: 4px;
  border-radius: 12px;
  background: #25273a;
  color: #a0a4b8;
  font-size: 32px;
}
.box {
  width: 9px;
  height: 19px;
  margin: 0 12px;
  border: 1px solid #666a7c;
}

.claim {
  display: flex;
  align-items: center;
  justify-content: center;
  gap: 14px;
  width: calc(100% - 58px);
  height: 110px;
  margin: 36px 29px 17px;
  border: 2px solid #84733f;
  border-radius: 20px;
  background: #303a27;
  font-size: 45px;
}
.claim svg {
  width: 44px;
  height: 44px;
}

/* life events */
.history-head {
  display: flex;
  align-items: center;
  justify-content: space-between;
  line-height: 65px;
}
.history-head h2 {
  font-size: 42px;
}
.history-head span {
  font-size: 32px;
  color: #525866;
}
.history li {
  display: flex;
  border-bottom: 2px solid #20222e;
  line-height: 61px;
}
.history li span {
  width: 98px;
  color: #838af0;
}
.history p {
  display: flex;
  align-items: center;
  gap: 12px;
}
.history p svg {
  width: 36px;
  height: 36px;
  margin-left: 4px;
}
.trade {
  color: #f4cd60;
}
.more {
  width: 100%;
  height: 63px;
  margin-top: 2px;
  border-radius: 12px;
  background: #25273a;
}

/* bottom navigation */
nav {
  display: flex;
  flex-direction: column;
  gap: 7px;
  padding: 8px 12px 10px;
  border-top: 2px solid #333646;
  background: #1b1c28;
}
.nav-row {
  display: flex;
  gap: 7px;
}
.nav-row button {
  position: relative;
  flex: 1 1 0;
  min-width: 0;
  height: 107px;
  display: flex;
  align-items: center;
  justify-content: center;
  gap: 12px;
  overflow: hidden;
  border-radius: 20px;
  background: #202230;
  font-size: 39px;
  white-space: nowrap;
}
.nav-row svg {
  width: 39px;
  height: 39px;
}
.family {
  display: flex;
}
.badge {
  position: absolute;
  top: 2px;
  right: 4px;
  width: 20px;
  height: 20px;
  border-radius: 50%;
  background: #eb4b3d;
}
```
